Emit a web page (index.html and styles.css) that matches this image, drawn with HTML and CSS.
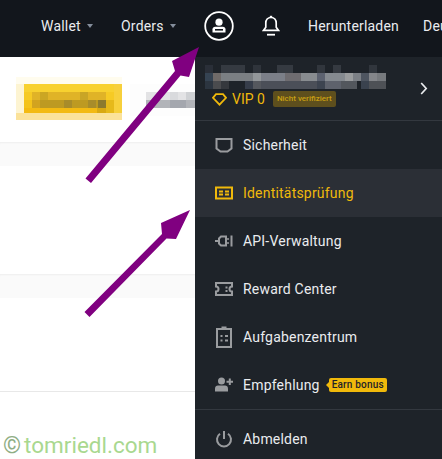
FILE: index.html
```html
<!DOCTYPE html>
<html>
<head>
  <meta charset="UTF-8">
  <meta name="viewport" content="width=device-width, initial-scale=1.0">
  <title>Konto</title>
  <link rel="stylesheet" href="styles.css">
</head>
<body>
  <div class="page">
    <header class="topbar">
      <a class="nav-link nav-wallet">Wallet<span class="caret"></span></a>
      <a class="nav-link nav-orders">Orders<span class="caret"></span></a>
      <svg class="nav-avatar" width="30" height="30" viewBox="0 0 30 30">
        <circle cx="15" cy="15" r="13.8" fill="none" stroke="#fff" stroke-width="1.8"/>
        <circle cx="15" cy="11.2" r="3.6" fill="#fff"/>
        <path d="M8.5 21.5v-3.2c0-1.5 1.2-2.6 2.6-2.6h7.8c1.4 0 2.6 1.1 2.6 2.6v3.2z" fill="#fff"/>
        <rect x="11" y="18" width="8" height="1.6" fill="#12161c"/>
      </svg>
      <svg class="nav-bell" width="18" height="22" viewBox="0 0 18 22">
        <path d="M9 2.5c-3.3 0-5.2 2.5-5.2 5.6v4.2L1.5 15.4h15l-2.3-3.1V8.1C14.2 5 12.3 2.5 9 2.5z" fill="none" stroke="#fff" stroke-width="1.7"/>
        <rect x="7.8" y="0.8" width="2.4" height="2.2" fill="#fff"/>
        <rect x="5" y="18.8" width="8" height="1.8" fill="#fff"/>
      </svg>
      <a class="nav-link nav-download">Herunterladen</a>
      <a class="nav-link nav-language">Deutsch</a>
    </header>

    <div class="content">
      <main class="main">
        <section class="hero">
          <svg class="blur-title" width="106" height="43" viewBox="0 0 106 43" shape-rendering="crispEdges">
            <rect width="106" height="7" fill="#fffcee"/>
            <rect y="7" width="8" height="29" fill="#fdf4d2"/>
            <rect x="8" y="7" width="90" height="8" fill="#f8d12f"/>
            <rect x="98" y="7" width="8" height="29" fill="#f7d03c"/>
            <rect x="8" y="15" width="90" height="8" fill="#f6ca24"/>
            <rect x="8" y="23" width="90" height="8" fill="#f4c31a"/>
            <rect x="8" y="31" width="90" height="5" fill="#f3ba12"/>
            <rect x="16" y="15" width="74" height="8" fill="#e0b327"/>
            <rect x="24" y="15" width="8" height="8" fill="#cba623"/>
            <rect x="64" y="15" width="8" height="8" fill="#c9a526"/>
            <rect x="16" y="23" width="8" height="8" fill="#d2a31f"/>
            <rect x="24" y="23" width="66" height="8" fill="#bd9a22"/>
            <rect x="48" y="23" width="8" height="8" fill="#a88c2a"/>
            <rect x="72" y="23" width="8" height="8" fill="#a88c2a"/>
            <rect x="82" y="23" width="8" height="8" fill="#8c7a2e"/>
            <rect x="81" y="31" width="9" height="5" fill="#d9a912"/>
            <rect x="90" y="23" width="8" height="13" fill="#e6b91a"/>
            <rect y="36" width="106" height="7" fill="#fbe29a"/>
          </svg>
          <svg class="blur-name" width="65" height="32" viewBox="0 0 65 32" shape-rendering="crispEdges">
            <rect width="65" height="32" fill="#fdfdfd"/>
            <rect x="16" y="8" width="49" height="8" fill="#e3e3e5"/>
            <rect x="40" y="8" width="8" height="8" fill="#d9dadd"/>
            <rect x="56" y="8" width="9" height="8" fill="#cfd1d4"/>
            <rect x="16" y="16" width="49" height="8" fill="#b2b4b9"/>
            <rect x="40" y="16" width="16" height="8" fill="#a4a7ae"/>
          </svg>
        </section>
        <div class="strip"></div>
        <section class="panel panel-first"></section>
        <div class="strip"></div>
        <section class="panel panel-second"></section>
      </main>

      <aside class="menu">
        <div class="user">
          <div class="user-info">
            <svg class="user-name" width="182" height="24" viewBox="0 0 182 24" shape-rendering="crispEdges">
              <rect x="0" y="0" width="8" height="8" fill="#2a2f38"/>
              <rect x="16" y="0" width="24" height="8" fill="#353a41"/>
              <rect x="48" y="0" width="8" height="8" fill="#2f343b"/>
              <rect x="72" y="0" width="16" height="8" fill="#353a41"/>
              <rect x="112" y="0" width="8" height="8" fill="#31363d"/>
              <rect x="128" y="0" width="8" height="8" fill="#353a41"/>
              <rect x="164" y="0" width="8" height="8" fill="#31363d"/>
              <rect x="0" y="8" width="8" height="8" fill="#354352"/>
              <rect x="8" y="8" width="8" height="8" fill="#6f6a68"/>
              <rect x="16" y="8" width="32" height="8" fill="#7b7f83"/>
              <rect x="48" y="8" width="8" height="8" fill="#93979a"/>
              <rect x="56" y="8" width="24" height="8" fill="#7b7f88"/>
              <rect x="80" y="8" width="16" height="8" fill="#6e6c70"/>
              <rect x="96" y="8" width="16" height="8" fill="#888c90"/>
              <rect x="112" y="8" width="8" height="8" fill="#5c6270"/>
              <rect x="120" y="8" width="24" height="8" fill="#858a90"/>
              <rect x="140" y="8" width="8" height="8" fill="#9a9c9e"/>
              <rect x="148" y="8" width="8" height="8" fill="#7c8086"/>
              <rect x="156" y="8" width="8" height="8" fill="#4e5560"/>
              <rect x="164" y="8" width="8" height="8" fill="#84868a"/>
              <rect x="172" y="8" width="9" height="8" fill="#777a7e"/>
              <rect x="0" y="16" width="8" height="8" fill="#2c3540"/>
              <rect x="8" y="16" width="8" height="8" fill="#4a4b4e"/>
              <rect x="16" y="16" width="8" height="8" fill="#35383d"/>
              <rect x="40" y="16" width="8" height="8" fill="#363d4a"/>
              <rect x="48" y="16" width="8" height="8" fill="#55585e"/>
              <rect x="56" y="16" width="56" height="8" fill="#4b4f58"/>
              <rect x="112" y="16" width="8" height="8" fill="#3d4450"/>
              <rect x="120" y="16" width="16" height="8" fill="#5e626c"/>
              <rect x="136" y="16" width="16" height="8" fill="#53575d"/>
              <rect x="156" y="16" width="8" height="8" fill="#3a424e"/>
              <rect x="164" y="16" width="17" height="8" fill="#4e5156"/>
            </svg>
            <div class="vip-row">
              <svg width="15" height="13" viewBox="0 0 15 13">
                <path d="M4 1.2h7l3 3.6-6.5 6.8L1 4.8z" fill="none" stroke="#f0b90b" stroke-width="1.8"/>
              </svg>
              <span class="vip-label">VIP 0</span>
              <span class="vip-status">Nicht verifiziert</span>
            </div>
          </div>
          <svg class="user-arrow" width="8" height="13" viewBox="0 0 8 13">
            <path d="M1.2 1l5 5.5-5 5.5" fill="none" stroke="#eaecef" stroke-width="1.7"/>
          </svg>
        </div>

        <a class="menu-item">
          <svg class="menu-icon" width="20" height="20" viewBox="0 0 20 20">
            <path d="M2.5 4h15v9.500L13.500 16.500h-7L2.500 13.500z" fill="none" stroke="#9a9c9f" stroke-width="2"/>
          </svg>
          Sicherheit
        </a>
        <a class="menu-item menu-item-active">
          <svg class="menu-icon" width="20" height="20" viewBox="0 0 20 20">
            <rect x="2" y="4.500" width="16" height="11" fill="none" stroke="#f0b90b" stroke-width="2"/>
            <path d="M5 7.500h4v2H5zM5 10.500h4v2H5zM11 7.500h4v2h-4zM11 10.500h4v2h-4z" fill="#f0b90b"/>
          </svg>
          Identitätsprüfung
        </a>
        <a class="menu-item">
          <svg class="menu-icon" width="20" height="20" viewBox="0 0 20 20">
            <path d="M1 10h3M5 7.500l2-2h5v9H7l-2-2z" fill="none" stroke="#9a9c9f" stroke-width="2"/>
            <path d="M12 8h3M12 12h3" stroke="#9a9c9f" stroke-width="1.500"/>
            <rect x="16.500" y="4.500" width="2" height="11" fill="#9a9c9f"/>
          </svg>
          API-Verwaltung
        </a>
        <a class="menu-item">
          <svg class="menu-icon" width="20" height="20" viewBox="0 0 20 20">
            <path d="M2 4h16v3.500a2.500 2.500 0 0 0 0 5V16H2v-3.500a2.500 2.500 0 0 0 0-5z" fill="none" stroke="#9a9c9f" stroke-width="2"/>
            <path d="M11.500 7.500h2v2h-2zM11.500 11h2v2h-2z" fill="#9a9c9f"/>
          </svg>
          Reward Center
        </a>
        <a class="menu-item">
          <svg class="menu-icon" width="20" height="24" viewBox="0 0 20 24">
            <path d="M3 4h14v18H3z" fill="none" stroke="#9a9c9f" stroke-width="2"/>
            <path d="M7.500 1.500h5V5h-5zM6.500 10h2v2h-2zM11 10h3v2h-3zM6.500 14.500h2v2h-2zM11 14.500h3v2h-3z" fill="#9a9c9f"/>
          </svg>
          Aufgabenzentrum
        </a>
        <a class="menu-item">
          <svg class="menu-icon" width="20" height="20" viewBox="0 0 20 20">
            <circle cx="7.500" cy="6" r="3.500" fill="#9a9c9f"/>
            <path d="M1 16.500v-3c0-1.700 1.300-3 3-3h7c1.700 0 3 1.300 3 3v3z" fill="#9a9c9f"/>
            <path d="M15.800 3.500v6.500M12.500 6.800h6.500" stroke="#9a9c9f" stroke-width="2"/>
          </svg>
          Empfehlung
          <span class="earn-badge">Earn bonus</span>
        </a>
        <a class="menu-item menu-item-logout">
          <svg class="menu-icon" width="20" height="20" viewBox="0 0 20 20">
            <path d="M6 4.800a7 7 0 1 0 8 0" fill="none" stroke="#9a9c9f" stroke-width="2"/>
            <path d="M10 2v8" stroke="#9a9c9f" stroke-width="2"/>
          </svg>
          Abmelden
        </a>
      </aside>
    </div>

    <svg class="arrows" width="442" height="459" viewBox="0 0 442 459">
      <path d="M85.500 178.500L175 71 172 61 199 47 189 77 180.500 75.500 91 183z" fill="#800080"/>
      <path d="M84.500 312L162 234 161 223 190 210 176 239 166.500 238.500 89.500 317z" fill="#800080"/>
    </svg>
    <div class="watermark"><span class="watermark-sign">©</span>tomriedl.com</div>
  </div>
</body>
</html>
```

FILE: styles.css
```css
* {
  box-sizing: border-box;
}

body {
  margin: 0;
  font-family: Roboto, "Liberation Sans", sans-serif;
  background-color: #fff;
}

.page {
  position: relative;
  display: flex;
  flex-direction: column;
  width: 442px;
  height: 459px;
  overflow: hidden;
}

/* Top bar */
.topbar {
  display: flex;
  align-items: center;
  flex: none;
  height: 57px;
  padding: 0 0 5px 41px;
  background-color: #12161c;
  white-space: nowrap;
}

.nav-link {
  display: flex;
  flex: none;
  align-items: center;
  font-size: 14px;
  letter-spacing: 0.2px;
  color: #eaecef;
}

.nav-wallet {
  width: 80px;
}

.nav-orders {
  width: 83px;
}

.caret {
  width: 0;
  height: 0;
  margin-left: 6px;
  border-left: 3.5px solid transparent;
  border-right: 3.5px solid transparent;
  border-top: 4px solid #848e9c;
}

.nav-avatar {
  flex: none;
  margin-right: 28px;
}

.nav-bell {
  flex: none;
  margin-right: 28px;
}

.nav-download {
  width: 115px;
}

/* Page behind the menu */
.content {
  display: flex;
  flex: 1;
  min-height: 0;
}

.main {
  display: flex;
  flex-direction: column;
  width: 195px;
}

.hero {
  display: flex;
  align-items: flex-start;
  height: 85px;
  padding: 20px 0 0 16px;
}

.blur-title {
  flex: none;
  margin-right: 8px;
}

.blur-name {
  flex: none;
  margin-top: 7px;
}

.strip {
  flex: none;
  height: 24px;
  background-color: #fafafa;
  box-shadow: inset 0 2px 2px -1px #eeeeee;
}

.panel-first {
  height: 108px;
}

.panel-second {
  height: 94px;
  border-bottom: 1px solid #e8e8e8;
}

/* Account menu */
.menu {
  flex: 1;
  background-color: #1e2329;
}

.user {
  display: flex;
  align-items: center;
  justify-content: space-between;
  height: 64px;
  padding: 8px 14px 0 10px;
  border-bottom: 1px solid #33383f;
}

.user-info {
  display: flex;
  flex-direction: column;
  height: 100%;
}

.user-name {
  display: block;
}

.vip-row {
  display: flex;
  align-items: center;
  height: 16px;
  margin-top: 2px;
  padding-left: 7px;
}

.vip-label {
  margin-left: 5px;
  font-size: 14px;
  color: #f0b90b;
}

.vip-status {
  margin-left: 8px;
  padding: 0 4px;
  height: 16px;
  line-height: 16px;
  border-radius: 2px;
  font-size: 8px;
  font-weight: 500;
  color: #c99f13;
  background-color: #5e4f1d;
}

.user-arrow {
  margin-top: -8px;
}

.menu-item {
  display: flex;
  align-items: center;
  height: 48px;
  padding-left: 19px;
  font-size: 14px;
  letter-spacing: 0.2px;
  color: #eaecef;
}

.menu-item-active {
  color: #f0b90b;
  background-color: #2b2f36;
}

.menu-item-logout {
  height: 50px;
  padding-top: 8px;
  border-top: 1px solid #33383f;
}

.menu-icon {
  flex: none;
  margin-right: 9px;
}

.earn-badge {
  position: relative;
  margin-left: 9px;
  padding: 0 3px;
  height: 14px;
  line-height: 14px;
  border-radius: 2px;
  font-size: 10px;
  font-weight: 500;
  letter-spacing: 0.2px;
  color: #1e2329;
  background-color: #f0b90b;
}

.earn-badge::before {
  content: "";
  position: absolute;
  left: -3px;
  top: 4px;
  border-top: 3px solid transparent;
  border-bottom: 3px solid transparent;
  border-right: 3px solid #f0b90b;
}

/* Annotations drawn on the screenshot */
.arrows {
  position: absolute;
  left: 0;
  top: 0;
}

.watermark {
  position: absolute;
  left: 3px;
  top: 430px;
  font-size: 22.5px;
  line-height: 30px;
  color: #a9d88f;
}

.watermark-sign {
  margin-right: 3px;
  font-size: 23px;
  color: #8fae85;
}
```
